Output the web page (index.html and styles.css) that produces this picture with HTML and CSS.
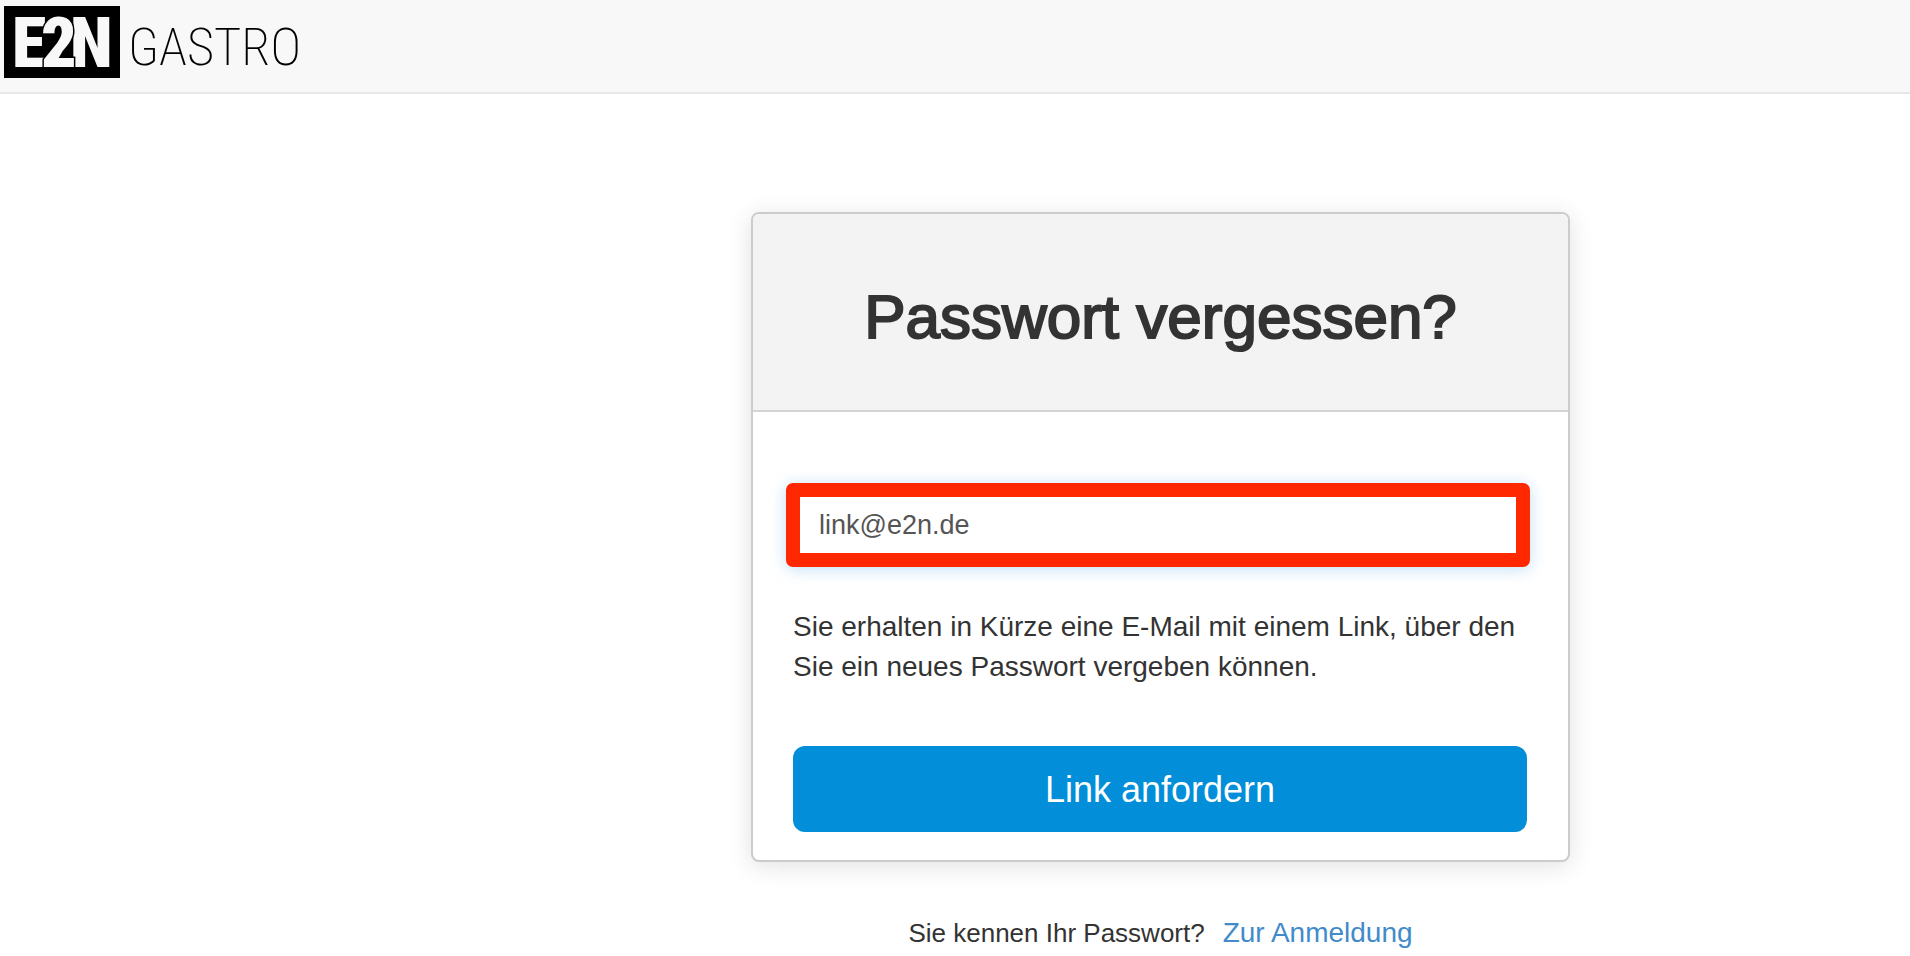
FILE: index.html
```html
<!DOCTYPE html>
<html lang="de">
<head>
<meta charset="utf-8">
<title>Passwort vergessen?</title>
<link rel="stylesheet" href="styles.css">
</head>
<body>
<header class="navbar">
  <a class="brand" href="#" aria-label="E2N Gastro">
    <svg class="logo" width="310" height="72" viewBox="0 0 310 72">
      <rect x="0" y="0" width="116" height="72" fill="#000"/>
      <g class="logo-bold">
        <text x="8" y="61">E</text>
        <text x="66" y="61">N</text>
        <text class="logo-two" x="37" y="61">2</text>
      </g>
      <text class="logo-thin" x="124" y="59">GASTRO</text>
    </svg>
  </a>
</header>
<main class="page">
  <form class="card">
    <div class="card-head"><h1 class="title">Passwort vergessen?</h1></div>
    <div class="card-body">
      <input class="field" type="email" aria-label="E-Mail" value="link@e2n.de">
      <p class="hint">Sie erhalten in Kürze eine E-Mail mit einem Link, über den Sie ein neues Passwort vergeben können.</p>
      <button class="submit" type="button">Link anfordern</button>
    </div>
  </form>
  <p class="signin"><span class="question">Sie kennen Ihr Passwort?</span><a class="link" href="#">Zur Anmeldung</a></p>
</main>
</body>
</html>
```
FILE: styles.css
```css
* { box-sizing: border-box; }
body {
  margin: 0;
  background: #fff;
  color: #333;
  font-family: "Liberation Sans", Arial, sans-serif;
  font-size: 28px;
  line-height: 40px;
}
.navbar {
  padding: 6px 4px 14px;
  background: #f8f8f8;
  border-bottom: 2px solid #e7e7e7;
}
.brand { display: block; width: max-content; }
.logo { display: block; font-family: "Roboto Condensed", Roboto, sans-serif; }
.logo-bold {
  fill: #f8f8f8;
  font-weight: 900;
  font-size: 70px;
}
.logo-two { stroke: #000; stroke-width: 3px; paint-order: stroke; }
.logo-thin {
  fill: #000;
  font-weight: 200;
  font-size: 52px;
}
.page {
  display: flex;
  flex-direction: column;
  align-items: center;
  padding: 118px 0 0 411px;
}
.card {
  width: 100%;
  max-width: 819px;
  border: 2px solid #ccc;
  border-radius: 8px;
  background: #fff;
  box-shadow: 0 4px 24px rgba(0, 0, 0, .12);
}
.card-head {
  padding: 69px 20px 59px;
  background: #f3f3f3;
  border-bottom: 2px solid #d4d4d4;
  border-radius: 6px 6px 0 0;
}
.title {
  margin: 0;
  font-size: 62px;
  font-weight: 400;
  line-height: 68px;
  text-align: center;
  -webkit-text-stroke: 2px #333;
}
.card-body {
  display: flex;
  flex-direction: column;
  padding: 71px 41px 28px 40px;
}
.field {
  height: 84px;
  margin: 0 -3px 0 -7px;
  padding: 0 19px;
  border: 14px solid #ff2800;
  border-radius: 7px;
  outline: 0;
  background: #fff;
  box-shadow: 0 2px 16px rgba(102, 175, 233, .4);
  color: #555;
  font: inherit;
  font-size: 27px;
}
.hint { margin: 40px 0 59px; }
.submit {
  height: 86px;
  padding: 2px 0 0;
  border: 0;
  border-radius: 12px;
  background: #028ed9;
  color: #fff;
  font: inherit;
  font-size: 36px;
}
.signin {
  display: flex;
  align-items: baseline;
  gap: 18px;
  margin: 51px 0 0;
}
.question { font-size: 26px; }
.link { color: #428bca; text-decoration: none; }
```
